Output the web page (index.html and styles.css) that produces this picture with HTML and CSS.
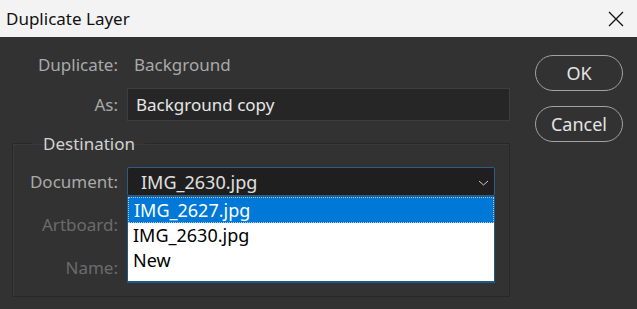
FILE: index.html
```html
<!DOCTYPE html>
<html lang="en">
<head>
    <meta charset="UTF-8">
    <title>Duplicate Layer</title>
    <link rel="stylesheet" href="styles.css">
</head>
<body>
    <div class="titlebar">
        <span class="title">Duplicate Layer</span>
        <svg class="close" width="16" height="16" viewBox="0 0 16 16">
            <path d="M1 1 L15 15 M15 1 L1 15" stroke="#111" stroke-width="1.3" fill="none"/>
        </svg>
    </div>
    <div class="dialog">
        <div class="main">
            <div class="row">
                <span class="label">Duplicate:</span>
                <span class="value">Background</span>
            </div>
            <div class="row row-as">
                <span class="label">As:</span>
                <input class="field" type="text" value="Background copy">
            </div>
            <fieldset class="group">
                <legend>Destination</legend>
                <div class="row">
                    <span class="label">Document:</span>
                    <div class="select open">
                        <span>IMG_2630.jpg</span>
                        <svg class="chevron" width="11" height="6" viewBox="0 0 11 6">
                            <path d="M1 1 L5.5 5 L10 1" stroke="#c8c8c8" stroke-width="1" fill="none"/>
                        </svg>
                        <ul class="list">
                            <li class="selected">IMG_2627.jpg</li>
                            <li>IMG_2630.jpg</li>
                            <li>New</li>
                        </ul>
                    </div>
                </div>
                <div class="row">
                    <span class="label disabled">Artboard:</span>
                    <div class="select off"></div>
                </div>
                <div class="row">
                    <span class="label disabled">Name:</span>
                    <div class="select off"></div>
                </div>
            </fieldset>
        </div>
        <div class="buttons">
            <button class="btn">OK</button>
            <button class="btn">Cancel</button>
        </div>
    </div>
</body>
</html>
```

FILE: styles.css
```css
body {
    margin: 0;
    background: #323232;
    font-family: 'Noto Sans', 'Open Sans', sans-serif;
    font-size: 17px;
    overflow: hidden;
}
.titlebar {
    height: 37px;
    background: #f3f3f3;
    display: flex;
    align-items: center;
    justify-content: space-between;
    padding: 0 13px 0 6px;
}
.title {
    color: #111;
    font-size: 17px;
}
.dialog {
    display: flex;
    padding: 12px 0 0 12px;
}
.main {
    width: 498px;
}
.row {
    display: grid;
    grid-template-columns: 106px 1fr;
    column-gap: 9px;
    align-items: center;
    height: 30px;
}
.label {
    text-align: right;
    color: #a9a9a9;
}
.label.disabled {
    color: #6b6b6b;
}
.value {
    color: #a9a9a9;
    padding-left: 7px;
}
.row-as {
    margin-top: 9px;
    height: 33px;
}
.field {
    height: 33px;
    box-sizing: border-box;
    background: #262626;
    border: 1px solid #3e3e3e;
    color: #e6e6e6;
    font: inherit;
    padding: 0 8px;
    outline: none;
}
.group {
    margin: 11px 0 0 0;
    padding: 12px 14px 14px 0;
    border: 1px solid #282828;
    box-shadow: inset 1px 1px 0 #3a3a3a;
    min-width: 0;
}
.group legend {
    margin-left: 20px;
    padding: 0 10px;
    color: #d2d2d2;
}
.group .row {
    grid-template-columns: 105px 1fr;
    height: 29px;
}
.group .row + .row {
    margin-top: 14px;
}
.select {
    position: relative;
    height: 29px;
    box-sizing: border-box;
    background: #1f1f1f;
    border: 1px solid #2d5d86;
    border-radius: 2px;
    color: #e0e0e0;
    font-size: 18px;
    display: flex;
    align-items: center;
    justify-content: space-between;
    padding: 0 5px 0 13px;
}
.select.off {
    border-color: #3a3a3a;
    background: #2a2a2a;
}
.chevron {
    margin-top: 2px;
}
.list {
    position: absolute;
    top: 28px;
    left: -1px;
    right: -1px;
    height: 87px;
    box-sizing: border-box;
    margin: 0;
    padding: 0;
    list-style: none;
    background: #fff;
    border: 1px solid #1d5a88;
    border-bottom-width: 2px;
    font-size: 18px;
    color: #000;
    z-index: 2;
}
.list li {
    height: 25px;
    line-height: 25px;
    padding-left: 5px;
}
.list li.selected {
    height: 26px;
    line-height: 24px;
    box-sizing: border-box;
    background: #0078d7;
    color: #fff;
    border: 1px dotted #a8c8e8;
}
.buttons {
    display: flex;
    flex-direction: column;
    gap: 15px;
    margin: 6px 0 0 25px;
}
.btn {
    width: 88px;
    height: 36px;
    background: transparent;
    border: 1.5px solid #a2a2a2;
    border-radius: 18px;
    color: #e4e4e4;
    font: inherit;
    font-size: 18px;
}
```
